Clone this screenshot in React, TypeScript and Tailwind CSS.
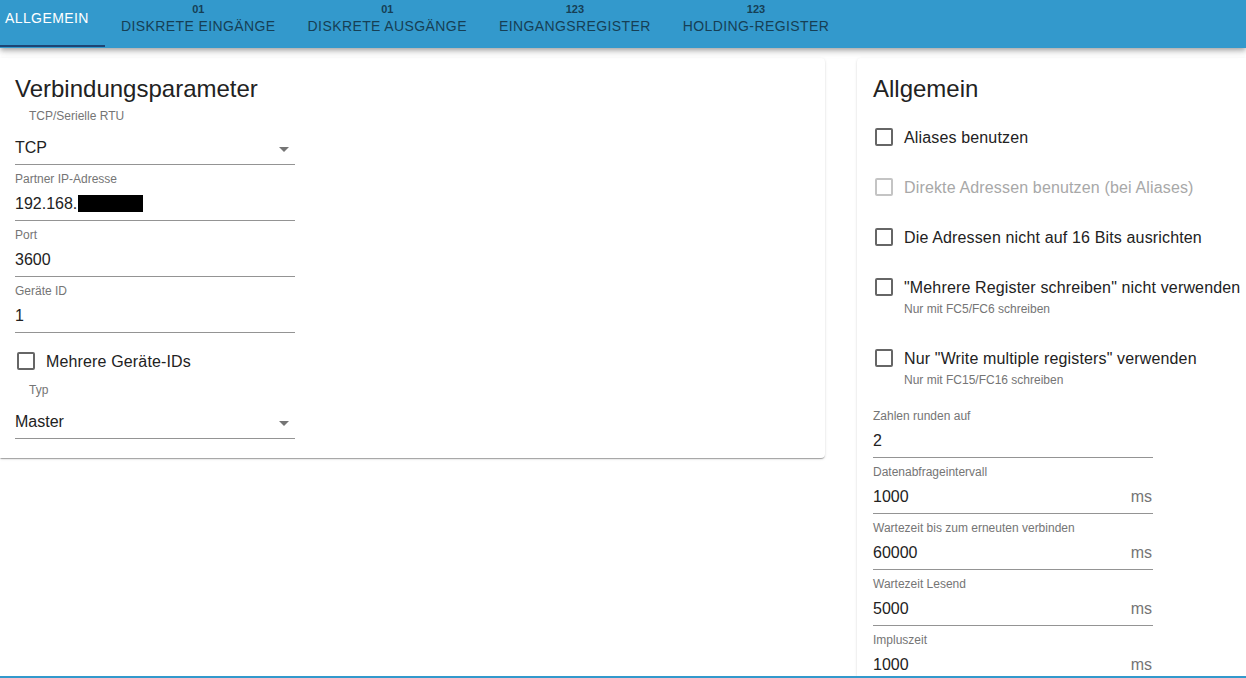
import React from "react";

const font = { fontFamily: '"Liberation Sans", Arial, sans-serif' };

function Arrow() {
  return (
    <svg width="10" height="5" viewBox="0 0 10 5" className="absolute right-[6px] top-[24px]">
      <path d="M0 0 L10 0 L5 5 Z" fill="#757575" />
    </svg>
  );
}

function Select({ label, value, labelMt }: { label: string; value: string; labelMt: string }) {
  return (
    <div className="w-[280px]">
      <div className={`${labelMt} pl-[14px] text-[12px] leading-[14px] text-[#757575]`}>{label}</div>
      <div className="relative pt-[15px] pb-[7px] border-b border-[#949494]">
        <div className="text-[16px] leading-[19px] text-[#222]">{value}</div>
        <Arrow />
      </div>
    </div>
  );
}

function Field({ label, value, unit, children }: { label: string; value?: string; unit?: string; children?: React.ReactNode }) {
  return (
    <div className="w-[280px] pt-[7px] pb-[7px] border-b border-[#949494]">
      <div className="text-[12px] leading-[14px] text-[#757575] whitespace-nowrap">{label}</div>
      <div className="mt-[8px] flex items-center justify-between text-[16px] leading-[19px]">
        <span className="flex items-center text-[#222]">
          {value}
          {children}
        </span>
        {unit && <span className="text-[#757575] pr-[1px]">{unit}</span>}
      </div>
    </div>
  );
}

function Check({ label, disabled, mt }: { label: string; disabled?: boolean; mt: string }) {
  return (
    <div className={`${mt} h-[40px] flex items-center whitespace-nowrap`}>
      <div
        className={`ml-[2px] w-[18px] h-[18px] rounded-[2px] border-2 ${
          disabled ? "border-[#c4c4c4]" : "border-[#666]"
        }`}
      />
      <span className={`ml-[11px] text-[16px] leading-[19px] tracking-[0.15px] ${disabled ? "text-[#a8a8a8]" : "text-[#222]"}`}>
        {label}
      </span>
    </div>
  );
}

function Helper({ text }: { text: string }) {
  return (
    <div className="-mt-[5px] pl-[31px] text-[12px] leading-[14px] text-[#757575] whitespace-nowrap">{text}</div>
  );
}

export default function App() {
  const tabs = [
    { n: "01", t: "DISKRETE EINGÄNGE" },
    { n: "01", t: "DISKRETE AUSGÄNGE" },
    { n: "123", t: "EINGANGSREGISTER" },
    { n: "123", t: "HOLDING-REGISTER" },
  ];
  return (
    <div style={font} className="w-[1246px] h-[678px] flex flex-col overflow-hidden bg-white">
      <div className="relative z-10 h-[48px] shrink-0 bg-[#3399cc] flex shadow-[0_2px_4px_-1px_rgba(0,0,0,0.2),0_4px_5px_0_rgba(0,0,0,0.14),0_1px_10px_0_rgba(0,0,0,0.12)]">
        <div className="relative w-[105px] pl-[5px] pt-[10px] text-[14px] leading-[16px] tracking-[0.4px] text-white">
          ALLGEMEIN
          <div className="absolute left-0 right-0 bottom-[1px] h-[2px] bg-[#1d4473]" />
        </div>
        {tabs.map((tb, i) => (
          <div key={i} className="px-[16px] pt-[3px] flex flex-col items-center text-[#163f55]">
            <div className="text-[11px] leading-[12px] font-bold">{tb.n}</div>
            <div className="mt-[3px] text-[14px] leading-[16px] tracking-[0.4px] whitespace-nowrap">{tb.t}</div>
          </div>
        ))}
      </div>
      <div className="flex-1 min-h-0 flex gap-[32px] pt-[10px] overflow-hidden">
        <div className="w-[825px] shrink-0 self-start rounded-r-[4px] bg-white px-[15px] pt-[15px] pb-[19px] shadow-[0_2px_1px_-1px_rgba(0,0,0,0.2),0_1px_1px_0_rgba(0,0,0,0.14),0_1px_3px_0_rgba(0,0,0,0.12)]">
          <div className="text-[24px] leading-[32px] text-[#222]">Verbindungsparameter</div>
          <Select label="TCP/Serielle RTU" value="TCP" labelMt="mt-[4px]" />
          <Field label="Partner IP-Adresse" value="192.168.">
            <span className="inline-block w-[65px] h-[17px] bg-black ml-[1px]" />
          </Field>
          <Field label="Port" value="3600" />
          <Field label="Geräte ID" value="1" />
          <Check label="Mehrere Geräte-IDs" mt="mt-[8px]" />
          <Select label="Typ" value="Master" labelMt="mt-[2px]" />
        </div>
        <div className="flex-1 min-w-0 rounded-tl-[4px] bg-white pl-[16px] pt-[15px] shadow-[0_2px_1px_-1px_rgba(0,0,0,0.2),0_1px_1px_0_rgba(0,0,0,0.14),0_1px_3px_0_rgba(0,0,0,0.12)]">
          <div className="text-[24px] leading-[32px] text-[#222]">Allgemein</div>
          <Check label="Aliases benutzen" mt="mt-[12px]" />
          <Check label="Direkte Adressen benutzen (bei Aliases)" disabled mt="mt-[10px]" />
          <Check label="Die Adressen nicht auf 16 Bits ausrichten" mt="mt-[10px]" />
          <Check label={'"Mehrere Register schreiben" nicht verwenden'} mt="mt-[10px]" />
          <Helper text="Nur mit FC5/FC6 schreiben" />
          <Check label={'Nur "Write multiple registers" verwenden'} mt="mt-[22px]" />
          <Helper text="Nur mit FC15/FC16 schreiben" />
          <div className="mt-[15px]">
            <Field label="Zahlen runden auf" value="2" />
            <Field label="Datenabfrageintervall" value="1000" unit="ms" />
            <Field label="Wartezeit bis zum erneuten verbinden" value="60000" unit="ms" />
            <Field label="Wartezeit Lesend" value="5000" unit="ms" />
            <Field label="Impluszeit" value="1000" unit="ms" />
          </div>
        </div>
      </div>
      <div className="h-[2px] shrink-0 bg-[#3399cc]" />
    </div>
  );
}
